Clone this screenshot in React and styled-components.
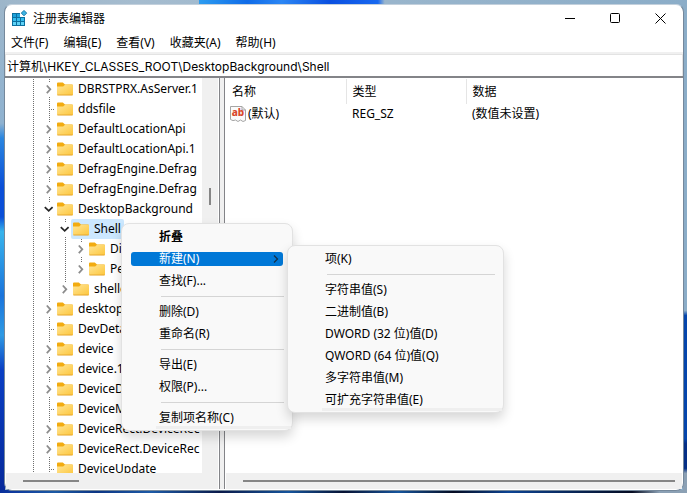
import React, { useState } from 'react'
import styled, { createGlobalStyle, css } from 'styled-components'

const GlobalStyle = createGlobalStyle`
  * {
    box-sizing: border-box;
  }

  body {
    margin: 0;
    color: #000;
    font-family: "Noto Sans", "Noto Sans CJK SC", sans-serif;
    font-size: 12px;
    line-height: 20px;
  }

  button,
  input {
    margin: 0;
    padding: 0;
    border: none;
    background: none;
    color: inherit;
    font: inherit;
  }
`

const Desktop = styled.div`
  display: flex;
  height: 100vh;
  min-height: 320px;
  padding: 4px 3px 2px 4px;
  background:
    linear-gradient(90deg, transparent 29%, #2c9cf0 29%, #0f6be8 36%, #2b86f4 41%, #0a4fe0 48%, #1768f0 55%, transparent 56%) top / 100% 4px no-repeat,
    linear-gradient(#8badc8 63%, #0546ac 64%, #0546ac 89%, #052f86 90%, #052f86 95%, #8ba0b4 96%) right / 4px 100% no-repeat,
    linear-gradient(90deg, #0a2f9c 0%, #1c5aa4 8%, #0c3584 14%, #1d5aa6 22%, #0b1a4a 32%, #15549c 42%, #071233 50%, #15549c 58%, #050c22 66%, #0c4393 74%, #050c22 92%, #8ba0b4 96%) bottom / 100% 3px no-repeat,
    linear-gradient(#9db6ca 0%, #8fb2d0 25%, #2a86e0 28%, #0b4fd8 38%, #0a4fd8 44%, #38b4ec 47%, #1a74dc 60%, #2e9ae4 68%, #0a3fc4 75%, #06299a 100%) left / 5px 100% no-repeat,
    linear-gradient(90deg, #9db6ca, #a5bccf 20%, #8badc8);
`

const Window = styled.section`
  position: relative;
  display: flex;
  flex: 1;
  flex-direction: column;
  min-width: 0;
  border: 1px solid #75889b;
  border-top-color: #c3d0dc;
  border-radius: 8px;
  background: #fff;
`

const TitleBar = styled.header`
  display: flex;
  align-items: center;
  flex: none;
  height: 27px;
  padding-left: 6px;
`

const Title = styled.h1`
  flex: 1;
  margin: 0 0 0 5px;
  font-size: 12px;
  font-weight: 400;
`

const WindowButton = styled.button`
  display: flex;
  align-items: center;
  justify-content: center;
  width: 45px;
  height: 27px;

  &:hover {
    background: #e9e9e9;
  }
`

const MenuBar = styled.nav`
  display: flex;
  gap: 15px;
  flex: none;
  height: 20px;
  padding: 2px 6px 0;
`

const MenuBarButton = styled.button`
  height: 18px;
  line-height: 18px;
  white-space: nowrap;
`

const AddressBar = styled.div`
  display: flex;
  flex: none;
  height: 26px;
  border-top: 2px solid #f0f0f0;
  border-bottom: 2px solid #838488;
`

const AddressInput = styled.input`
  flex: 1;
  min-width: 0;
  height: 22px;
  padding: 0 1px;
  border: 1px solid #e3e3e3;
  border-bottom: none;
  font-family: Inter, "Noto Sans CJK SC", sans-serif;
  outline: none;
`

const Panes = styled.div`
  display: flex;
  flex: 1;
  min-height: 0;
  padding-bottom: 1px;
`

const TreePane = styled.div`
  display: grid;
  grid-template-columns: 1fr 16px;
  grid-template-rows: 1fr 16px;
  flex: none;
  width: 215px;
  padding: 0 1px;
  border-right: 1px solid #838488;
`

const Splitter = styled.div`
  flex: none;
  width: 4px;
  background: #f0f0f0;
`

const ListPane = styled.div`
  display: grid;
  grid-template-rows: 1fr 16px;
  flex: 1;
  min-width: 0;
  padding: 0 1px;
  border-left: 1px solid #838488;
`

const Tree = styled.ul`
  min-height: 0;
  margin: 0;
  padding: 1px 0 0 17px;
  overflow: hidden;
  list-style: none;
`

const TreeRow = styled.li`
  display: flex;
  height: 20px;
`

const TreeItem = styled.span`
  display: flex;
  align-items: center;
  gap: 5px;
  padding: 0 3px 0 2px;
  border-radius: 2px;
  background: ${p => p.$selected ? '#cce8ff' : 'transparent'};
  white-space: nowrap;
`

const ExpandButton = styled.button`
  display: block;
  width: 16px;
  height: 20px;
`

const Glyph = styled.svg`
  display: block;
  flex: none;
`

const VerticalScroll = styled.div`
  display: flex;
  justify-content: center;
  padding-top: 110px;
  background: #f0f0f0;
`

const HorizontalScroll = styled.div`
  display: flex;
  align-items: center;
  grid-column: 1 / -1;
  padding: 0 7px 0 17px;
  background: #f0f0f0;
`

const Thumb = styled.span`
  background: #868686;

  ${p => p.$vertical ? css`
    width: 2px;
    height: 17px;
  ` : css`
    width: ${p.$length};
    height: 2px;
  `}
`

const ValueTable = styled.table`
  align-self: start;
  width: 100%;
  margin-top: 1px;
  border-collapse: collapse;
  table-layout: fixed;
`

const HeadCell = styled.th`
  width: ${p => p.$width || 'auto'};
  height: 25px;
  padding: 0 6px;
  border-right: ${p => p.$width ? '1px solid #e5e5e5' : 'none'};
  font-weight: 400;
  text-align: left;
`

const Cell = styled.td`
  height: 20px;
  padding: 0 6px;
  white-space: nowrap;
`

const ValueName = styled.span`
  display: flex;
  align-items: center;
  gap: 2px;
  margin-left: -2px;
`

const Popup = styled.div`
  position: absolute;
  top: ${p => p.$top};
  left: ${p => p.$left};
  width: ${p => p.$width};
  padding: 2px 1px 1px;
  border: 1px solid #e2e2e2;
  border-radius: 8px;
  background: #f9f9f9;
  box-shadow: 0 6px 12px rgba(0, 0, 0, 0.16);
`

const PopupItem = styled.button`
  display: flex;
  align-items: center;
  width: 100%;
  height: 22px;
  padding: 0 9px 0 36px;
  font-weight: ${p => p.$bold ? 700 : 400};
  text-align: left;
  white-space: nowrap;

  &:last-child {
    background: linear-gradient(#efefef, #efefef) 33px 19px / 100% 3px no-repeat;
  }

  ${p => p.$active && css`
    justify-content: space-between;
    width: auto;
    height: 14px;
    margin: 4px 8px;
    padding: 0 4px 0 28px;
    border-radius: 3px;
    background: #0078d7;
    color: #fff;
  `}
`

const PopupList = styled.div`
  display: flex;
  flex-direction: column;
`

const PopupDivider = styled.hr`
  height: 1px;
  margin: 4px 7px 4px 38px;
  border: none;
  background: #d5d5d5;
`

// each rail describes one indent column left of the folder:
// '|' dotted line, '>' collapsed, 'v' expanded, '-' leaf
// L is a collapsed node that closes its branch
const keys = [
  { rails: '|>', name: 'DBRSTPRX.AsServer.1' },
  { rails: '|-', name: 'ddsfile' },
  { rails: '|>', name: 'DefaultLocationApi' },
  { rails: '|>', name: 'DefaultLocationApi.1' },
  { rails: '|>', name: 'DefragEngine.Defrag' },
  { rails: '|>', name: 'DefragEngine.Defrag' },
  { rails: '|v', name: 'DesktopBackground' },
  { rails: '||v', name: 'Shell' },
  { rails: '|||>', name: 'Di' },
  { rails: '|||L', name: 'Pe' },
  { rails: '||L', name: 'shellex' },
  { rails: '|>', name: 'desktop' },
  { rails: '|-', name: 'DevDetail' },
  { rails: '|>', name: 'device' },
  { rails: '|>', name: 'device.1' },
  { rails: '|>', name: 'DeviceDi' },
  { rails: '|-', name: 'DeviceM' },
  { rails: '|>', name: 'DeviceRect.DeviceRec' },
  { rails: '|>', name: 'DeviceRect.DeviceRec' },
  { rails: '|-', name: 'DeviceUpdate' }
]

const menus = ['文件(F)', '编辑(E)', '查看(V)', '收藏夹(A)', '帮助(H)']

const contextMenu = [
  { label: '折叠', bold: true },
  { label: '新建(N)', active: true },
  { label: '查找(F)...' },
  null,
  { label: '删除(D)' },
  { label: '重命名(R)' },
  null,
  { label: '导出(E)' },
  { label: '权限(P)...' },
  null,
  { label: '复制项名称(C)' }
]

const newMenu = [
  { label: '项(K)' },
  null,
  { label: '字符串值(S)' },
  { label: '二进制值(B)' },
  { label: 'DWORD (32 位)值(D)' },
  { label: 'QWORD (64 位)值(Q)' },
  { label: '多字符串值(M)' },
  { label: '可扩充字符串值(E)' }
]

const Dots = ({ d }) => (
  <path d={d} stroke='#6f6f6f' strokeWidth='1' strokeDasharray='1 1' fill='none' />
)

const Rail = ({ type }) => {
  if (type === '|' || type === '-') {
    return (
      <Glyph width='16' height='20' aria-hidden='true'>
        <Dots d='M10.5 0V20' />
        {type === '-' && <Dots d='M12 10.5H18' />}
      </Glyph>
    )
  }

  const open = type === 'v'

  return (
    <ExpandButton type='button' aria-label={open ? '折叠' : '展开'}>
      <Glyph width='16' height='20' aria-hidden='true'>
        <Dots d='M10.5 0V3' />
        {type !== 'L' && <Dots d='M10.5 18V20' />}
        <path
          d={open ? 'M5.8 8.2L9.7 11.8L13.6 8.2' : 'M7.8 6.5L11.3 10.3L7.8 14.1'}
          stroke={open ? '#262626' : '#8c8c8c'}
          strokeWidth='1.8'
          fill='none'
        />
      </Glyph>
    </ExpandButton>
  )
}

const FolderIcon = () => (
  <Glyph width='16' height='14' viewBox='0 0 16 14' aria-hidden='true'>
    <path d='M0 1.5Q0 .5 1 .5H5.8L8 2.6H15Q16 2.6 16 3.6V8H0Z' fill='#f2ab10' />
    <path d='M0 4.6H6.2L8 2.8H15.2Q16 2.8 16 3.6V12.4Q16 13.2 15.2 13.2H.8Q0 13.2 0 12.4Z' fill='url(#folder)' />
    <path d='M.4 13H15.6' stroke='#dfa02a' strokeWidth='.8' />
  </Glyph>
)

const RegistryIcon = () => (
  <Glyph width='17' height='17' viewBox='0 0 17 17' aria-hidden='true'>
    <path d='M1 3H9V7H14V16H1Z' fill='#0b6f9f' />
    <path d='M2 4H5V7H2ZM6 4H9V7H6Z' fill='#1ea2da' />
    <path d='M2 8H5V11H2ZM6 8H9V11H6ZM10 8H13V11H10Z' fill='#35bdee' />
    <path d='M2 12H5V15H2ZM6 12H9V15H6ZM10 12H13V15H10Z' fill='#5fd2f6' />
    <path d='M13 .4L15.7 3.1L13 5.8L10.3 3.1Z' fill='#3db4e4' stroke='#0b6f9f' strokeWidth='.9' />
  </Glyph>
)

const StringIcon = () => (
  <Glyph width='16' height='16' viewBox='0 0 16 16' aria-hidden='true'>
    <path
      d='M.5 .5H12L15.5 4V14.5L13 15.5L10.5 14L8 15.5L5.5 14L3 14.6L.5 13.5Z'
      fill='#fbfbfb'
      stroke='#a5a5a5'
    />
    <path d='M12 .5V4H15.5' fill='none' stroke='#a5a5a5' />
    <text x='8' y='10' textAnchor='middle' fontFamily='Noto Sans' fontSize='10' fontWeight='800' fill='#d9472b'>ab</text>
  </Glyph>
)

const MenuItems = ({ items }) => (
  <PopupList>
    {items.map((item, i) => item ? (
      <PopupItem key={item.label} type='button' role='menuitem' $bold={item.bold} $active={item.active}>
        {item.label}
        {item.active && (
          <Glyph width='6' height='8' aria-hidden='true'>
            <path d='M1 .5L4.5 4L1 7.5' stroke='#12304a' strokeWidth='1.3' fill='none' />
          </Glyph>
        )}
      </PopupItem>
    ) : <PopupDivider key={i} />)}
  </PopupList>
)

const App = () => {
  const [path, setPath] = useState('计算机\\HKEY_CLASSES_ROOT\\DesktopBackground\\Shell')

  return (
    <Desktop>
      <GlobalStyle />

      <Window>
        <TitleBar>
          <RegistryIcon />
          <Title>注册表编辑器</Title>
          <WindowButton type='button' aria-label='最小化'>
            <Glyph width='11' height='11'><path d='M0 5.5H10' stroke='#000' /></Glyph>
          </WindowButton>
          <WindowButton type='button' aria-label='最大化'>
            <Glyph width='11' height='11'>
              <rect x='.5' y='.5' width='9' height='9' rx='1' stroke='#000' fill='none' />
            </Glyph>
          </WindowButton>
          <WindowButton type='button' aria-label='关闭'>
            <Glyph width='11' height='11'><path d='M.5 .5L10.5 10.5M10.5 .5L.5 10.5' stroke='#000' /></Glyph>
          </WindowButton>
        </TitleBar>

        <MenuBar>
          {menus.map(menu => <MenuBarButton key={menu} type='button'>{menu}</MenuBarButton>)}
        </MenuBar>

        <AddressBar>
          <AddressInput
            type='text'
            aria-label='地址'
            spellCheck='false'
            value={path}
            onChange={e => setPath(e.target.value)}
          />
        </AddressBar>

        <Panes>
          <TreePane>
            <Tree>
              {keys.map((key, i) => (
                <TreeRow key={i}>
                  {key.rails.split('').map((type, n) => <Rail key={n} type={type} />)}
                  <TreeItem $selected={key.name === 'Shell'}>
                    <FolderIcon />
                    {key.name}
                  </TreeItem>
                </TreeRow>
              ))}
            </Tree>
            <VerticalScroll><Thumb $vertical /></VerticalScroll>
            <HorizontalScroll><Thumb $length='56px' /></HorizontalScroll>
          </TreePane>

          <Splitter />

          <ListPane>
            <ValueTable>
              <thead>
                <tr>
                  <HeadCell $width='120px'>名称</HeadCell>
                  <HeadCell $width='120px'>类型</HeadCell>
                  <HeadCell>数据</HeadCell>
                </tr>
              </thead>
              <tbody>
                <tr>
                  <Cell><ValueName><StringIcon />(默认)</ValueName></Cell>
                  <Cell>REG_SZ</Cell>
                  <Cell>(数值未设置)</Cell>
                </tr>
              </tbody>
            </ValueTable>
            <HorizontalScroll><Thumb $length='100%' /></HorizontalScroll>
          </ListPane>
        </Panes>

        <Popup role='menu' $top='218px' $left='116px' $width='172px'>
          <MenuItems items={contextMenu} />
        </Popup>
        <Popup role='menu' $top='240px' $left='282px' $width='217px'>
          <MenuItems items={newMenu} />
        </Popup>
      </Window>

      <svg width='0' height='0' aria-hidden='true'>
        <linearGradient id='folder' x1='0' y1='0' x2='1' y2='1'>
          <stop offset='0' stopColor='#ffe596' />
          <stop offset='1' stopColor='#fdc63c' />
        </linearGradient>
      </svg>
    </Desktop>
  )
}

export default App
